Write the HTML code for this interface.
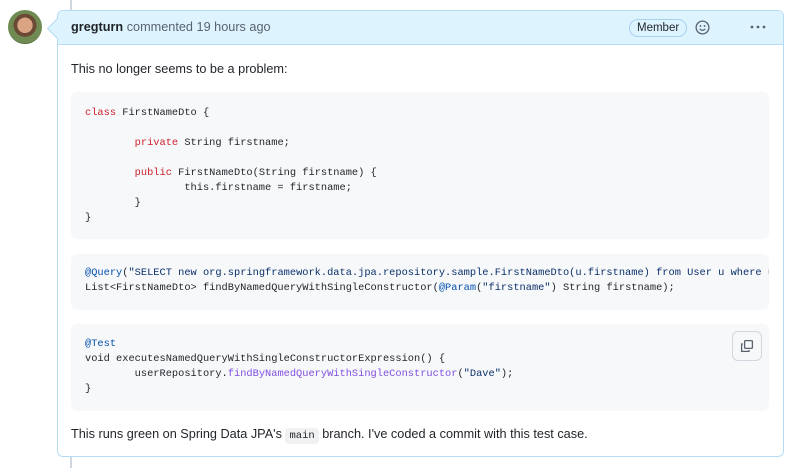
<!DOCTYPE html>
<html><head><style>
body{margin:0;width:800px;height:468px;background:#fff;position:relative;overflow:hidden;font-family:"Liberation Sans",sans-serif;color:#1f2328}
.tl{position:absolute;left:70px;width:2px;background:#d0d7de}
.av{position:absolute;left:8px;top:10px;width:34px;height:34px;border-radius:50%;background:radial-gradient(circle at 50% 45%,#d9a384 0 30%,#6b4a35 31% 45%,#6f8a52 46% 70%,#4f6b3c 71%);overflow:hidden}
.box{position:absolute;left:57px;top:10px;width:725px;height:445px;border:1px solid #b6dbf5;border-radius:6px;background:#fff}
.hd{height:33px;background:#ddf4ff;border-bottom:1px solid #b6dbf5;border-radius:6px 6px 0 0;position:relative;font-size:12.7px;line-height:33px;padding-left:13px;color:#59636e}
.hd b{color:#1f2328}
.arrow{position:absolute;left:-8px;top:10px;width:14px;height:14px;background:#ddf4ff;border-left:1px solid #b6dbf5;border-bottom:1px solid #b6dbf5;transform:rotate(45deg)}
.mem{position:absolute;left:571px;top:8px;height:16px;line-height:16px;padding:0 7px;border:1px solid #a8d1f0;border-radius:9px;font-size:11.5px;color:#1f2328}
p{position:absolute;left:13px;margin:0;font-size:12.7px}
.code{position:absolute;left:13px;width:698px;background:#f6f8fa;border-radius:6px;font-family:"Liberation Mono",monospace;font-size:10.35px;line-height:15px;white-space:pre;color:#1f2328;overflow:hidden;padding-left:14px;box-sizing:border-box}
.k{color:#cf222e}.a{color:#0550ae}.s{color:#0a3069}.f{color:#8250df}
.cp{position:absolute;right:7px;top:7px;width:28px;height:28px;border:1px solid #d0d7de;border-radius:6px;background:#f6f8fa}
code{font-family:"Liberation Mono",monospace;font-size:10.5px;background:#eff1f3;padding:2px 4px;border-radius:4px}
</style></head><body>
<div class="tl" style="top:0;height:12px"></div>
<div class="tl" style="top:455px;height:13px"></div>
<div class="av"></div>
<div class="box">
 <div class="hd"><div class="arrow"></div><b>gregturn</b> commented 19 hours ago
  <div class="mem">Member</div>
  <svg style="position:absolute;left:637px;top:9px" width="15" height="15" viewBox="0 0 16 16"><circle cx="8" cy="8" r="6.8" fill="none" stroke="#59636e" stroke-width="1.4"/><circle cx="5.8" cy="6.3" r="1" fill="#59636e"/><circle cx="10.2" cy="6.3" r="1" fill="#59636e"/><path d="M5 9.5q3 3 6 0" fill="none" stroke="#59636e" stroke-width="1.3"/></svg>
  <svg style="position:absolute;left:692px;top:14px" width="16" height="4"><circle cx="2" cy="2" r="1.4" fill="#59636e"/><circle cx="8" cy="2" r="1.4" fill="#59636e"/><circle cx="14" cy="2" r="1.4" fill="#59636e"/></svg>
 </div>
 <p style="top:51px">This no longer seems to be a problem:</p>
 <div class="code" style="top:81px;height:147px;padding-top:14px"><span class="k">class</span> FirstNameDto {

        <span class="k">private</span> String firstname;

        <span class="k">public</span> FirstNameDto(String firstname) {
                this.firstname = firstname;
        }
}</div>
 <div class="code" style="top:243px;height:56px;padding-top:12px"><span class="a">@Query</span>(<span class="s">"SELECT new org.springframework.data.jpa.repository.sample.FirstNameDto(u.firstname) from User u where u.firstname = ?1"</span>)
List&lt;FirstNameDto&gt; findByNamedQueryWithSingleConstructor(<span class="a">@Param</span>(<span class="s">"firstname"</span>) String firstname);</div>
 <div class="code" style="top:313px;height:87px;padding-top:13px"><span class="a">@Test</span>
void executesNamedQueryWithSingleConstructorExpression() {
        userRepository.<span class="f">findByNamedQueryWithSingleConstructor</span>(<span class="s">"Dave"</span>);
}<div class="cp"><svg style="position:absolute;left:6px;top:6px" width="16" height="16" viewBox="0 0 16 16" fill="none" stroke="#59636e" stroke-width="1.3"><path d="M4 6H2.6v7.4H10V12"/><rect x="5.6" y="2.6" width="7.8" height="7.8" rx="1"/></svg></div></div>
 <p style="top:416px">This runs green on Spring Data JPA's <code>main</code> branch. I've coded a commit with this test case.</p>
</div>
</body></html>
